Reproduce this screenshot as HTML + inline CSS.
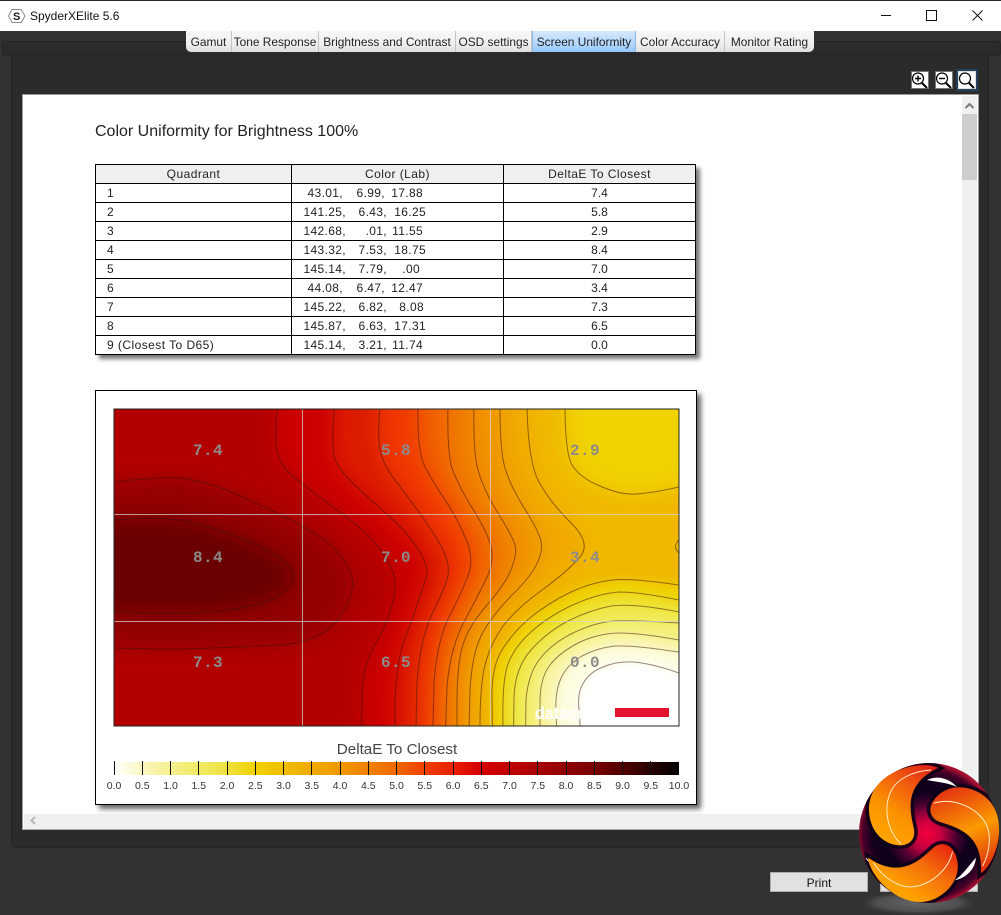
<!DOCTYPE html>
<html><head><meta charset="utf-8"><title>SpyderXElite 5.6</title>
<style>
html,body{margin:0;padding:0;background:#323232}
body{width:1001px;height:915px;position:relative;overflow:hidden;font-family:"Liberation Sans",Arial,sans-serif;color:#222}
.a{position:absolute}
#title{left:0;top:1px;width:1001px;height:30px;background:#fff}
#strip{left:2px;top:41px;width:997px;height:13px;background:#2b2b2b;border:1px solid #262626;border-radius:3px}
#panel{left:11px;top:54px;width:978px;height:794px;background:#2b2b2b;border:1px solid #252525;box-sizing:border-box;border-radius:0 0 5px 5px}
.tab{position:absolute;top:31px;height:21px;line-height:23px;text-align:center;font-size:11.9px;background:linear-gradient(#f7f7f7,#f0f0f0 60%,#dedede);border-right:1px solid #c4c4c4;box-sizing:border-box;color:#222;white-space:nowrap}
.tab.on{background:linear-gradient(#d6e8fb,#b4d8ff 60%,#92c6fb);border-left:1px solid #8ab8e8;border-right:1px solid #8ab8e8}
#view{left:22px;top:94px;width:957px;height:736px;background:#fff;border:1px solid #9a9a9a;border-bottom:1px solid #aaa;box-sizing:border-box}
#vs{left:962px;top:96px;width:15px;height:718px;background:#f0f0f0}
#th{left:962px;top:114px;width:15px;height:66px;background:#cdcdcd}
#hs{left:24px;top:814px;width:953px;height:15px;background:#f0f0f0}
h1{position:absolute;left:95px;top:122px;margin:0;font-size:16px;font-weight:normal;color:#222;white-space:nowrap;line-height:19px}
table{position:absolute;left:95px;top:164px;border-collapse:collapse;table-layout:fixed;width:600px;box-shadow:4px 4px 4px #777;font-size:12px;color:#222;background:#fff}
td,th{border:1px solid #000;height:18px;padding:0;line-height:18px;font-weight:normal;white-space:nowrap;overflow:hidden}
th{background:#efefef;text-align:center;letter-spacing:.45px}
td.l{padding-left:11px;letter-spacing:.45px}
td.d{text-align:center}
td.m{white-space:pre;letter-spacing:.35px}
td.m i{display:inline-block;font-style:normal;text-align:right}
.p i:nth-child(1){width:51px}.p i:nth-child(2){width:42px}.p i:nth-child(3){width:38px}
.q i:nth-child(1){width:54px}.q i:nth-child(2){width:41px}.q i:nth-child(3){width:39px}
#frame{left:95px;top:390px;width:602px;height:415px;background:#fff;border:1px solid #000;box-sizing:border-box;box-shadow:4px 4px 5px #666}
.btn{position:absolute;top:872px;height:20px;width:98px;line-height:20px;text-align:center;background:#e1e1e1;border:1px solid #adadad;box-sizing:border-box;font-size:12px;color:#111}
.zb{position:absolute;top:71px;width:18px;height:18px;background:#fff;border:1px solid #777;box-sizing:border-box}
svg{position:absolute;left:0;top:0}
</style></head><body>
<div class="a" style="left:0;top:0;width:1001px;height:1px;background:#2a2422"></div>
<div class="a" id="title"></div>
<div class="a" style="left:30px;top:8px;font-size:12px;line-height:16px;color:#111">SpyderXElite 5.6</div>
<div class="a" id="strip"></div>
<div class="a" id="panel"></div>
<div class="tab" style="left:186px;width:46px;border-radius:0 0 0 5px">Gamut</div>
<div class="tab" style="left:232px;width:87px">Tone Response</div>
<div class="tab" style="left:319px;width:137px">Brightness and Contrast</div>
<div class="tab" style="left:456px;width:76px">OSD settings</div>
<div class="tab on" style="left:532px;width:104px">Screen Uniformity</div>
<div class="tab" style="left:636px;width:89px">Color Accuracy</div>
<div class="tab" style="left:725px;width:89px;border-radius:0 0 5px 0;border-right:0">Monitor Rating</div>
<div class="a" style="left:956px;top:69px;width:22px;height:22px;background:#23415f"></div>
<div class="zb" style="left:911px"></div><div class="zb" style="left:935px"></div><div class="zb" style="left:958px;border-color:#ddd"></div>
<div class="a" id="view"></div>
<div class="a" id="vs"></div><div class="a" id="th"></div><div class="a" id="hs"></div>
<h1>Color Uniformity for Brightness 100%</h1>
<table>
<colgroup><col style="width:196px"><col style="width:212px"><col style="width:192px"></colgroup>
<tr><th>Quadrant</th><th>Color (Lab)</th><th>DeltaE To Closest</th></tr>
<tr><td class="l">1</td><td class="m p"><i>43.01,</i><i>6.99,</i><i>17.88</i></td><td class="d">7.4</td></tr>
<tr><td class="l">2</td><td class="m q"><i>141.25,</i><i>6.43,</i><i>16.25</i></td><td class="d">5.8</td></tr>
<tr><td class="l">3</td><td class="m q"><i>142.68,</i><i>.01,</i><i style="width:36px">11.55</i></td><td class="d">2.9</td></tr>
<tr><td class="l">4</td><td class="m q"><i>143.32,</i><i>7.53,</i><i>18.75</i></td><td class="d">8.4</td></tr>
<tr><td class="l">5</td><td class="m q"><i>145.14,</i><i>7.79,</i><i style="width:33px">.00</i></td><td class="d">7.0</td></tr>
<tr><td class="l">6</td><td class="m p"><i>44.08,</i><i>6.47,</i><i>12.47</i></td><td class="d">3.4</td></tr>
<tr><td class="l">7</td><td class="m q"><i>145.22,</i><i>6.82,</i><i style="width:37px">8.08</i></td><td class="d">7.3</td></tr>
<tr><td class="l">8</td><td class="m q"><i>145.87,</i><i>6.63,</i><i>17.31</i></td><td class="d">6.5</td></tr>
<tr><td class="l">9 (Closest To D65)</td><td class="m q"><i>145.14,</i><i>3.21,</i><i style="width:36px">11.74</i></td><td class="d">0.0</td></tr>
</table>
<div class="a" id="frame"></div>
<div class="btn" style="left:770px">Print</div>
<div class="btn" style="left:880px"></div>

<svg width="1001" height="915" viewBox="0 0 1001 915" xmlns="http://www.w3.org/2000/svg">
<defs>
<clipPath id="hc"><rect x="114" y="409" width="565" height="317"/></clipPath>
<filter id="bl" filterUnits="userSpaceOnUse" x="0" y="300" width="800" height="540" color-interpolation-filters="sRGB"><feGaussianBlur stdDeviation="10"/></filter>
<filter id="bl2" filterUnits="userSpaceOnUse" x="0" y="300" width="800" height="540" color-interpolation-filters="sRGB"><feGaussianBlur stdDeviation="5"/></filter>
<path id="c11" d="M565 370L565 405Q565 452 572 465Q580 478 600 486Q620 495 636 494Q653 493 679 487L740 474L740 370Z"/>
<path id="c10" d="M527 370L527 405Q528 462 539 482Q550 502 570 522Q592 543 580 557Q567 572 542 590Q517 608 503 626Q490 645 485 665Q480 685 480 726L480 770L60 770L60 370Z"/>
<path id="c9" d="M500 370L500 405Q500 452 505 468Q510 485 523 506Q537 528 540 538Q544 548 538 561Q533 575 511 596Q490 618 481 636Q472 655 470 690L468 770L60 770L60 370Z"/>
<path id="c8" d="M474 370L474 405Q473 452 478 470Q483 488 496 510Q510 532 514 542Q518 552 512 567Q507 582 487 605Q467 628 462 648Q457 668 457 700L457 770L60 770L60 370Z"/>
<path id="c7" d="M448 370L448 405Q447 452 452 468Q458 485 471 506Q485 528 490 543Q495 558 488 575Q480 592 465 620Q450 648 447 687L444 770L60 770L60 370Z"/>
<path id="c6" d="M418 370L418 405Q417 452 425 467Q433 482 445 500Q457 518 465 537Q474 556 469 573Q463 590 450 615Q437 640 434 683L432 770L60 770L60 370Z"/>
<path id="c5" d="M380 370L380 405Q377 440 381 454Q385 468 398 484Q410 500 421 515Q432 530 441 546Q450 563 448 575Q445 588 432 614Q420 640 417 683L415 770L60 770L60 370Z"/>
<path id="c4" d="M335 370L335 405Q330 448 336 462Q343 475 358 488Q373 502 390 517Q407 532 418 549Q430 567 426 579Q422 590 416 608Q410 625 403 644Q397 662 395 700L395 770L60 770L60 370Z"/>
<path id="c3" d="M278 370L278 400Q274 435 277 450Q280 465 291.5 475Q303 485 321.5 498.5Q340 512 356.5 525Q373 538 385 556.5Q398 575 394 596.5Q390 618 376.5 641.5Q363 665 362 690L361 770L60 770L60 370Z"/>
<path id="c2" d="M60 482L114 482Q170 475 192 480Q215 484 238 495Q260 505 283 516Q305 527 320 537Q335 547 347 565Q358 582 347 605Q335 627 319 635Q303 643 280 645Q257 646 212 648Q167 650 114 648L60 648Z"/>
<path id="c1" d="M60 520L114 520Q165 516 190 522Q215 528 238 537Q262 546 280 558Q297 570 293 581Q289 592 270 600Q250 608 220 611Q190 615 114 612L60 612Z"/>
<path id="b1" d="M740 590L679 585Q633 578 613 580Q593 582 571 592Q550 602 531 617Q513 632 502 650Q491 668 492 700L493 770L740 770Z"/>
<path id="b2" d="M740 610L679 600Q640 592 620 592Q600 593 575 604Q550 615 531 632Q513 648 507 667Q502 685 503 726L503 770L740 770Z"/>
<path id="b3" d="M740 622L679 612Q633 603 611 606Q590 610 568 621Q547 632 531 650Q515 668 514 697L513 770L740 770Z"/>
<path id="b4" d="M740 625L679 623Q633 620 613 621Q593 623 571 634Q550 645 539 660Q528 675 526 700L525 770L740 770Z"/>
<path id="b5" d="M740 650L679 640Q640 633 620 633Q600 633 580 642Q560 652 550 665Q540 678 540 702L540 770L740 770Z"/>
<path id="b6" d="M740 662L679 652Q633 645 615 646Q597 648 582 656Q567 665 561 678Q555 692 556 709L558 770L740 770Z"/>
<path id="b7" d="M740 695L679 673Q650 663 633 662Q617 661 603 667Q590 672 584 682Q577 692 579 709L583 770L740 770Z"/>
<linearGradient id="bar">
<stop offset="0" stop-color="#ffffff"/><stop offset=".05" stop-color="#faf7c0"/><stop offset=".1" stop-color="#f5f08e"/><stop offset=".15" stop-color="#f1ea66"/><stop offset=".2" stop-color="#f0e040"/><stop offset=".25" stop-color="#f0d200"/><stop offset=".3" stop-color="#f0be00"/><stop offset=".35" stop-color="#f0aa00"/><stop offset=".4" stop-color="#f09800"/><stop offset=".45" stop-color="#f08000"/><stop offset=".5" stop-color="#f06800"/><stop offset=".55" stop-color="#f04000"/><stop offset=".6" stop-color="#e82000"/><stop offset=".65" stop-color="#d40000"/><stop offset=".7" stop-color="#c00000"/><stop offset=".75" stop-color="#a80000"/><stop offset=".8" stop-color="#900000"/><stop offset=".85" stop-color="#780000"/><stop offset=".9" stop-color="#500000"/><stop offset=".95" stop-color="#280000"/><stop offset="1" stop-color="#000000"/>
</linearGradient>
<radialGradient id="shd"><stop offset="0" stop-color="#666"/><stop offset=".7" stop-color="#4e4e4e"/><stop offset="1" stop-color="#3a3a3a" stop-opacity="0"/></radialGradient>
<radialGradient id="core" gradientUnits="userSpaceOnUse" cx="-2" cy="1" r="70"><stop offset="0" stop-color="#f5003c"/><stop offset=".2" stop-color="#c80040"/><stop offset=".42" stop-color="#4a0030"/><stop offset=".6" stop-color="#0e001c"/><stop offset=".78" stop-color="#14001e"/><stop offset=".92" stop-color="#4a0028"/><stop offset="1" stop-color="#a81030"/></radialGradient>
<linearGradient id="g1" gradientUnits="userSpaceOnUse" x1="8" y1="-68" x2="-45" y2="5"><stop offset="0" stop-color="#dd1a1a"/><stop offset=".3" stop-color="#ee5010"/><stop offset=".7" stop-color="#fb9200"/><stop offset="1" stop-color="#ffa400"/></linearGradient>
<linearGradient id="g2" gradientUnits="userSpaceOnUse" x1="-33" y1="13" x2="19" y2="-57"><stop offset="0" stop-color="#e63a10"/><stop offset=".5" stop-color="#fb9a00"/><stop offset="1" stop-color="#dd2a10"/></linearGradient>
<linearGradient id="g3" gradientUnits="userSpaceOnUse" x1="-16" y1="8" x2="-44" y2="-48"><stop offset="0" stop-color="#e8280f"/><stop offset=".5" stop-color="#f5700a"/><stop offset="1" stop-color="#ffa200"/></linearGradient>
<clipPath id="ball"><circle r="70"/></clipPath>
<path id="bl3" d="M9 -65C-8 -74 -60 -62 -60 -24C-60 -6 -50 9 -33 12C-22 14 -13 8 -15 -4C-19 -22 -26 -48 9 -65Z"/>
<path id="hl" d="M-28 11C-42 -2 -46 -25 -38 -42C-32 -54 -16 -62 2 -63" fill="none" stroke="#fff4d0" stroke-width=".9"/>
<path id="wh" d="M-2 -53C8 -58 20 -55 28 -46C20 -50 8 -51 -2 -53Z" fill="#fff"/>
</defs>

<!-- heat map -->
<g clip-path="url(#hc)">
<g filter="url(#bl)">
<rect x="40" y="340" width="720" height="450" fill="#f0b800"/>
<use href="#c11" fill="#f0d200"/>
<use href="#c10" fill="#f0a800"/>
<use href="#c9" fill="#f09400"/>
<use href="#c8" fill="#f07c00"/>
<use href="#c7" fill="#f06000"/>
<use href="#c6" fill="#f03800"/>
<use href="#c5" fill="#dc1c00"/>
<use href="#c4" fill="#cc0000"/>
<use href="#c3" fill="#b20000"/>
<use href="#c2" fill="#940000"/>
<use href="#c1" fill="#6a0000"/>
</g>
<g filter="url(#bl2)">
<use href="#b1" fill="#efd000"/>
<use href="#b2" fill="#eede28"/>
<use href="#b3" fill="#f0e950"/>
<use href="#b4" fill="#f3ef78"/>
<use href="#b5" fill="#f8f5a8"/>
<use href="#b6" fill="#fdfce0"/>
<use href="#b7" fill="#ffffff"/>
</g>
<g fill="none" stroke="#3c1408" stroke-opacity=".52" stroke-width="1">
<use href="#c11"/><use href="#c10"/><use href="#c9"/><use href="#c8"/><use href="#c7"/><use href="#c6"/><use href="#c5"/><use href="#c4"/><use href="#c3"/><use href="#c2"/><use href="#c1"/>
<use href="#b1"/><use href="#b2"/><use href="#b3"/><use href="#b4"/><use href="#b5"/><use href="#b6"/><use href="#b7"/>
<path d="M690 540L679 540Q672 547 679 553L690 553"/>
</g>
<g stroke="#d8d8d8" stroke-opacity=".7" stroke-width="1">
<path d="M302.5 409V726M490.5 409V726M114 514.5H679M114 621.5H679"/>
</g>
<text x="535" y="718" font-family="Liberation Sans" font-size="16" font-weight="bold" fill="#fff">datacolor</text>
<rect x="535" y="718" width="50" height="1" fill="#fff"/>
<rect x="615" y="708" width="54" height="9" fill="#e3122d"/>
<g font-family="Liberation Mono,monospace" font-size="16" font-weight="bold" fill="#8e8a8a" text-anchor="middle" letter-spacing=".4">
<text x="208" y="455">7.4</text><text x="396" y="455">5.8</text><text x="585" y="455">2.9</text>
<text x="208" y="562">8.4</text><text x="396" y="562">7.0</text><text x="585" y="562">3.4</text>
<text x="208" y="667">7.3</text><text x="396" y="667">6.5</text><text x="585" y="667">0.0</text>
</g>
</g>
<rect x="114" y="409" width="565" height="317" fill="none" stroke="#222" stroke-width="1"/>

<!-- colour bar -->
<text x="397" y="754" font-family="Liberation Sans" font-size="15.2" fill="#444" text-anchor="middle">DeltaE To Closest</text>
<rect x="114" y="762" width="565" height="13" fill="url(#bar)"/>
<path stroke="#111" stroke-width="1" d="M114.5 761V775M142.5 761V775M170.5 761V775M198.5 761V775M227.5 761V775M255.5 761V775M283.5 761V775M311.5 761V775M340.5 761V775M368.5 761V775M396.5 761V775M424.5 761V775M453.5 761V775M481.5 761V775M509.5 761V775M537.5 761V775M566.5 761V775M594.5 761V775M622.5 761V775M650.5 761V775"/>
<g font-family="Liberation Sans" font-size="10.5" fill="#333" text-anchor="middle">
<text x="114" y="789">0.0</text><text x="142.25" y="789">0.5</text><text x="170.5" y="789">1.0</text><text x="198.75" y="789">1.5</text><text x="227" y="789">2.0</text><text x="255.25" y="789">2.5</text><text x="283.5" y="789">3.0</text><text x="311.75" y="789">3.5</text><text x="340" y="789">4.0</text><text x="368.25" y="789">4.5</text><text x="396.5" y="789">5.0</text><text x="424.75" y="789">5.5</text><text x="453" y="789">6.0</text><text x="481.25" y="789">6.5</text><text x="509.5" y="789">7.0</text><text x="537.75" y="789">7.5</text><text x="566" y="789">8.0</text><text x="594.25" y="789">8.5</text><text x="622.5" y="789">9.0</text><text x="650.75" y="789">9.5</text><text x="679" y="789">10.0</text>
</g>

<!-- title bar icons -->
<path d="M12 9.5H21L25 16L21 22.5H12L8.5 16Z" fill="#fff" stroke="#8a8a8a" stroke-width="1"/>
<text x="16.7" y="20" font-family="Liberation Sans" font-size="11" font-weight="bold" fill="#222" text-anchor="middle">S</text>
<path d="M881 15.5H891" stroke="#111" stroke-width="1"/>
<rect x="926.5" y="10.5" width="10" height="10" fill="none" stroke="#111" stroke-width="1"/>
<path d="M972.5 10.5L982.5 20.5M982.5 10.5L972.5 20.5" stroke="#111" stroke-width="1" fill="none"/>

<!-- zoom icons -->
<g fill="none" stroke="#000">
<circle cx="918" cy="78.5" r="5.5" stroke-width="1.2"/><path d="M922 83L927 88" stroke-width="2"/><path d="M915 78.5H921M918 75.5V81.5" stroke-width="1.4"/>
<circle cx="942" cy="78.5" r="5.5" stroke-width="1.2"/><path d="M946 83L951 88" stroke-width="2"/><path d="M939 78.5H945" stroke-width="1.4"/>
<circle cx="965" cy="78.5" r="5.5" stroke-width="1.2"/><path d="M969 83L974 88" stroke-width="2"/>
</g>

<!-- scroll arrows -->
<path d="M965.5 108L969.5 104L973.5 108" fill="none" stroke="#7a7a7a" stroke-width="2"/>
<path d="M35 817L31.5 820.5L35 824" fill="none" stroke="#b8b8b8" stroke-width="2"/>

<!-- logo -->
<ellipse cx="918" cy="903" rx="60" ry="12" fill="url(#shd)"/>
<g transform="translate(929 833)">
<circle r="70" fill="url(#core)"/>
<g clip-path="url(#ball)">
<use href="#bl3" fill="none" stroke="#0c0016" stroke-width="7" stroke-opacity=".9"/>
<use href="#bl3" fill="none" stroke="#0c0016" stroke-width="7" stroke-opacity=".9" transform="rotate(120)"/>
<use href="#bl3" fill="none" stroke="#0c0016" stroke-width="7" stroke-opacity=".9" transform="rotate(240)"/>
</g>
<use href="#wh"/><use href="#wh" transform="rotate(120)"/>
<path d="M-63 25C-58 32 -50 37 -43 38" fill="none" stroke="#fff" stroke-width="1"/>
<use href="#bl3" fill="url(#g1)"/>
<use href="#hl"/>
<g transform="rotate(120)"><use href="#bl3" fill="url(#g2)"/><use href="#hl"/></g>
<g transform="rotate(240)"><use href="#bl3" fill="url(#g3)"/><use href="#hl"/></g>
</g>
</svg>
</body></html>
